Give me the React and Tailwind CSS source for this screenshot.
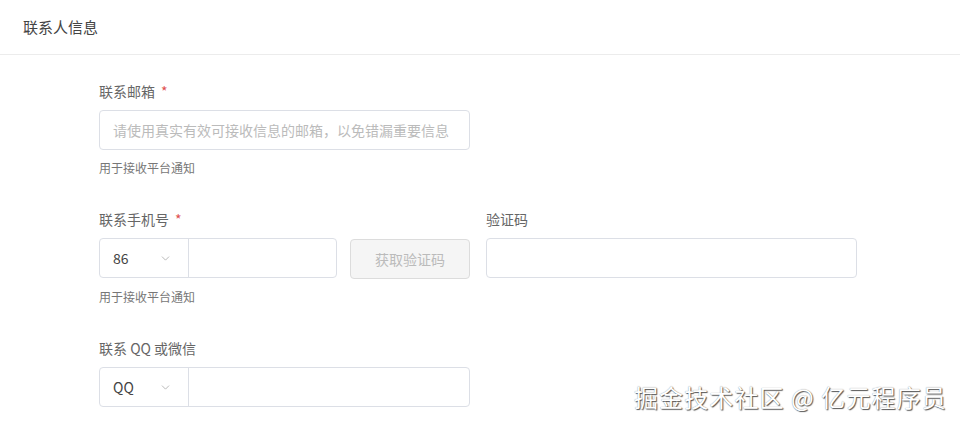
import { ChevronDown } from "lucide-react";

const font = { fontFamily: '"Noto Sans CJK SC", "Noto Sans", sans-serif' };

const Label = ({ children, required }) => (
  <div className="mb-[9px] flex h-5 items-center text-[14px] leading-5 text-[#666]">
    {children}
    {required && <span className="ml-[6px] text-[#e05050]">*</span>}
  </div>
);

const Help = ({ children }) => (
  <div className="mt-[9px] text-[12px] leading-[18px] text-[#777]">{children}</div>
);

const SelectGroup = ({ value, className }) => (
  <div className={`flex h-10 rounded-[4px] border border-[#dcdfe6] bg-white ${className}`}>
    <div className="flex w-[89px] items-center justify-between border-r border-[#dcdfe6] pl-[13px] pr-[16px] text-[14px] text-[#444]">
      <span>{value}</span>
      <ChevronDown className="h-[13px] w-[13px] text-[#aaa]" strokeWidth={1.5} />
    </div>
    <div className="flex-1" />
  </div>
);

export default function App() {
  return (
    <div className="relative h-[428px] w-[960px] overflow-hidden bg-white" style={font}>
      <div className="flex h-[55px] items-center border-b border-[#ececec] pl-[23px] text-[15px] text-[#444]">
        联系人信息
      </div>

      <div className="pl-[99px] pt-[26px]">
        <Label required>联系邮箱</Label>
        <div className="flex h-10 w-[371px] items-center rounded-[4px] border border-[#dcdfe6] px-[13px] text-[14px] text-[#bbb]">
          请使用真实有效可接收信息的邮箱，以免错漏重要信息
        </div>
        <Help>用于接收平台通知</Help>

        <div className="mt-[32px] flex gap-4">
          <div>
            <Label required>联系手机号</Label>
            <div className="flex gap-[13px]">
              <SelectGroup value="86" className="w-[238px]" />
              <button className="mt-px h-10 w-[120px] rounded-[4px] border border-[#dcdcdc] bg-[#f5f5f5] text-[14px] text-[#bbb]">
                获取验证码
              </button>
            </div>
            <Help>用于接收平台通知</Help>
          </div>
          <div>
            <Label>验证码</Label>
            <div className="mt-px h-10 w-[371px] rounded-[4px] border border-[#dcdfe6]" />
          </div>
        </div>

        <div className="mt-[32px]">
          <Label>联系 QQ 或微信</Label>
          <SelectGroup value="QQ" className="w-[371px]" />
        </div>
      </div>

      <div className="absolute left-[634px] top-[381px] text-[24px] leading-8 tracking-[1.1px] text-white [text-shadow:1px_1px_1px_#555,0_0_1px_#888]">
        掘金技术社区 @ 亿元程序员
      </div>
    </div>
  );
}
